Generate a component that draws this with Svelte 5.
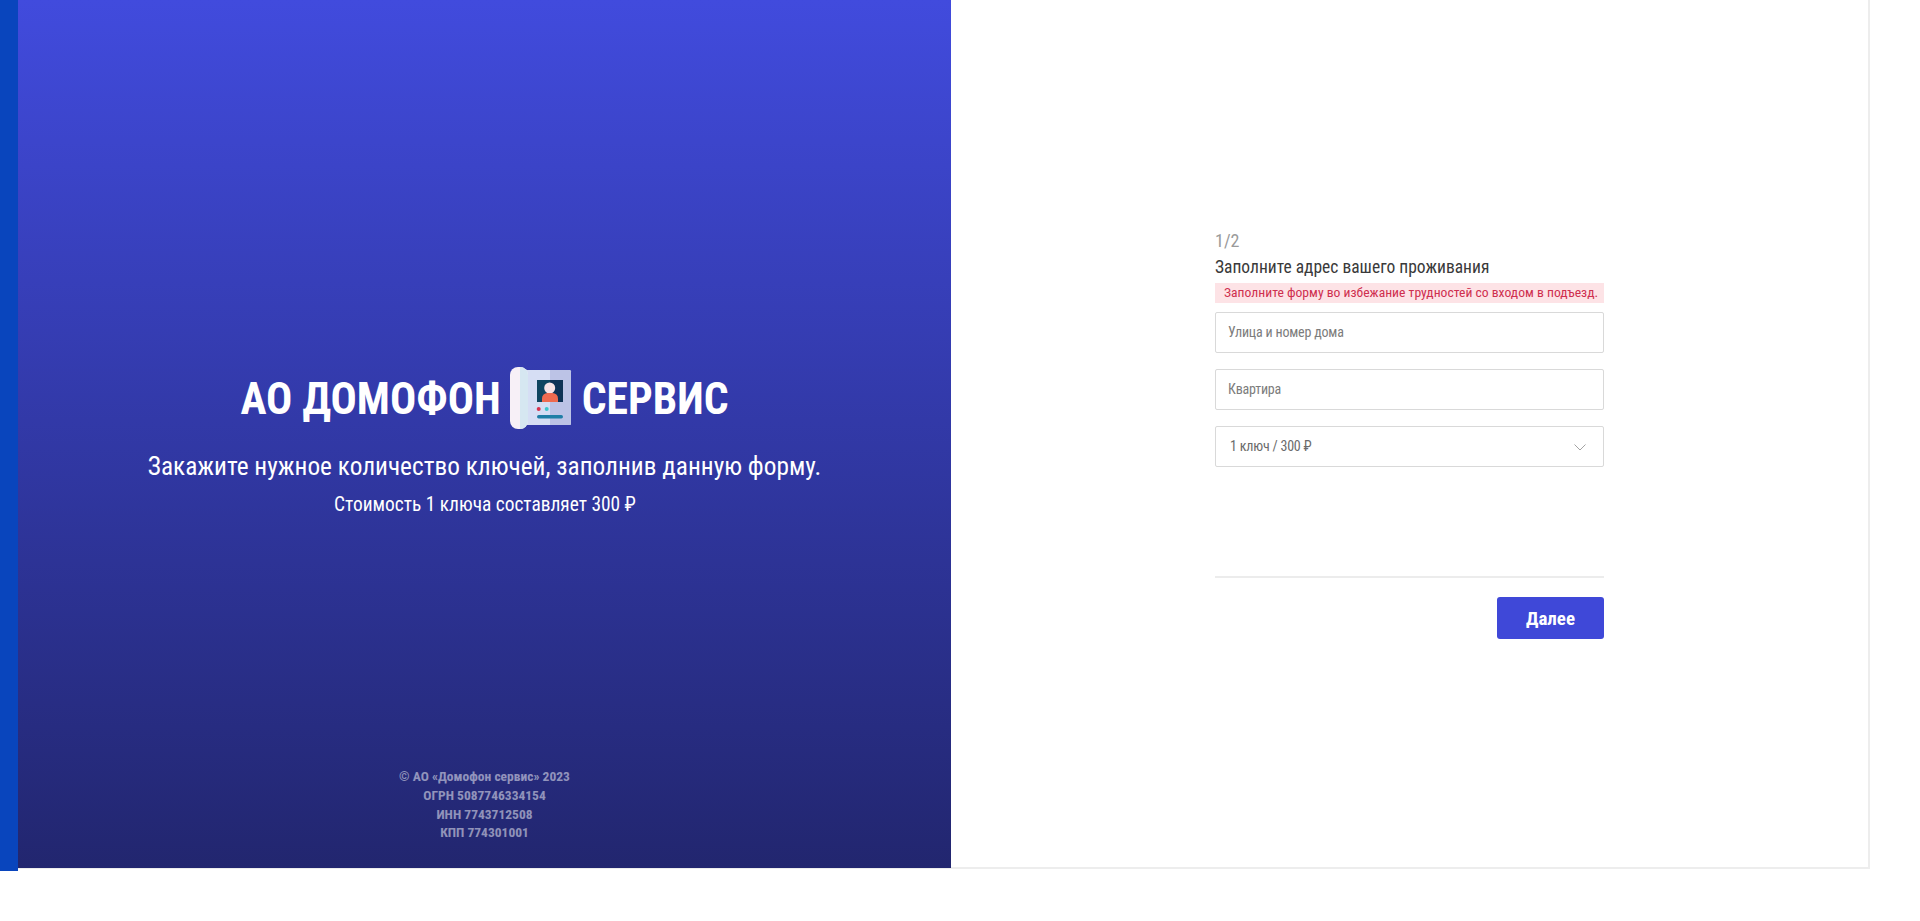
<script>
    let street = $state('');
    let flat = $state('');
    let keys = $state('1');
    const options = [1, 2, 3, 4, 5];
</script>

<div class="page">
    <div class="stripe"></div>
    <div class="card">
        <section class="promo">
            <div class="promo-main">
                <h1>
                    <span>АО ДОМОФОН</span>
                    <svg class="logo" viewBox="0 0 62 62" aria-hidden="true">
                        <rect x="9" y="3" width="52" height="55" rx="1.500" fill="#d6def4" />
                        <path d="M40 3h19.500a1.500 1.500 0 0 1 1.500 1.500v52a1.500 1.500 0 0 1-1.500 1.500H40z" fill="#bcc3e6" />
                        <rect x="0" y="0" width="18" height="62" rx="8" fill="#f7f0f7" />
                        <path d="M10 0h0a8 8 0 0 1 8 8v46a8 8 0 0 1-8 8h0z" fill="#d6e7f1" />
                        <rect x="27" y="13" width="26" height="22" fill="#0f4560" />
                        <rect x="40" y="13" width="13" height="22" fill="#0e3256" />
                        <circle cx="39.700" cy="21" r="5.500" fill="#f7e3e6" />
                        <path d="M32 35v-3.500a5.500 5.500 0 0 1 5.500-5.500h5a5.500 5.500 0 0 1 5.500 5.500V35z" fill="#ee6a50" />
                        <circle cx="28.700" cy="42" r="2" fill="#d8324f" />
                        <circle cx="36.700" cy="42" r="2" fill="#3fc6cc" />
                        <rect x="27" y="48" width="26" height="3.500" rx="1.700" fill="#1f7ea6" />
                    </svg>
                    <span>СЕРВИС</span>
                </h1>
                <p class="lead">Закажите нужное количество ключей, заполнив данную форму.</p>
                <p class="price">Стоимость 1 ключа составляет 300 ₽</p>
            </div>
            <footer>
                <div>© АО «Домофон сервис» 2023</div>
                <div>ОГРН 5087746334154</div>
                <div>ИНН 7743712508</div>
                <div>КПП 774301001</div>
            </footer>
        </section>

        <section class="side">
            <form onsubmit={(e) => e.preventDefault()}>
                <div class="step">1/2</div>
                <div class="title">Заполните адрес вашего проживания</div>
                <div class="alert">Заполните форму во избежание трудностей со входом в подъезд.</div>

                <input class="field" type="text" placeholder="Улица и номер дома" bind:value={street} />
                <input class="field" type="text" placeholder="Квартира" bind:value={flat} />

                <div class="select-wrap">
                    <select class="field" bind:value={keys}>
                        {#each options as n}
                            <option value={String(n)}>{n} ключ / {n * 300} ₽</option>
                        {/each}
                    </select>
                    <svg class="chevron" viewBox="0 0 12 7" aria-hidden="true">
                        <path d="M0.500 0.500L6 6L11.500 0.500" fill="none" stroke="#a3a3a3" stroke-width="1" />
                    </svg>
                </div>

                <div class="actions">
                    <button type="submit">Далее</button>
                </div>
            </form>
        </section>
    </div>
</div>

<style>

:global(body) {
    background: #fff;
}

.page {
    display: flex;
    height: 871px;
    font-family: Roboto, "Liberation Sans", sans-serif;
    font-stretch: 75%;
}

.stripe {
    width: 18px;
    background: #0945bd;
}

.card {
    flex: 1;
    max-width: 1852px;
    height: 869px;
    display: flex;
    box-sizing: border-box;
    border-right: 2px solid #ededed;
    border-bottom: 2px solid #ededed;
}

.promo {
    width: 933px;
    margin-bottom: -1px;
    display: flex;
    flex-direction: column;
    align-items: center;
    color: #fff;
    background: linear-gradient(180deg, #414bdd 0%, #22266f 100%);
}

.promo-main {
    padding-top: 367px;
    flex: 1;
    text-align: center;
}

h1 {
    margin: 0;
    display: flex;
    justify-content: center;
    align-items: center;
    gap: 9.500px;
    height: 64px;
    font-size: 43.600px;
    font-weight: 700;
}

.logo {
    width: 62px;
    height: 62px;
    margin-bottom: 2px;
}

.lead {
    margin: 21px 0 0;
    font-size: 25.300px;
    line-height: 30px;
}

.price {
    margin: 11px 0 0;
    padding-left: 1px;
    font-size: 19.400px;
    line-height: 24px;
}

footer {
    padding-bottom: 26px;
    text-align: center;
    font-size: 13.500px;
    line-height: 18.700px;
    font-weight: 700;
    color: rgba(255, 255, 255, 0.5);
}

.side {
    flex: 1;
    display: flex;
    justify-content: center;
    align-items: center;
    padding-top: 1px;
}

form {
    width: 389px;
    display: flex;
    flex-direction: column;
}

.step {
    font-size: 18px;
    line-height: 24px;
    color: #9a9a9a;
}

.title {
    margin-top: 2px;
    font-size: 17.500px;
    line-height: 24px;
    color: #3a3a3a;
}

.alert {
    margin-top: 3.500px;
    height: 20px;
    line-height: 19px;
    padding-left: 9px;
    font-size: 13.650px;
    white-space: nowrap;
    color: #cf2f4f;
    background: #fde3e6;
}

.field {
    display: block;
    width: 100%;
    height: 41px;
    margin-top: 9px;
    padding: 0 12px;
    box-sizing: border-box;
    border: 1px solid #d9d9d9;
    border-radius: 2px;
    background: #fff;
    font-family: inherit;
    font-stretch: inherit;
    font-size: 14px;
    letter-spacing: -0.200px;
    color: #6b6b6b;
}

.field + .field {
    margin-top: 16px;
}

.field::placeholder {
    color: #7c7c7c;
}

.select-wrap {
    position: relative;
    margin-top: 16px;
}

select.field {
    margin-top: 0;
    padding-left: 14px;
    appearance: none;
}

.chevron {
    position: absolute;
    right: 18px;
    top: 18px;
    width: 12px;
    height: 7px;
}

.actions {
    margin-top: 109.500px;
    padding-top: 19px;
    border-top: 2px solid #ececec;
    display: flex;
    justify-content: flex-end;
}

button {
    width: 107px;
    height: 42px;
    border: none;
    border-radius: 3px;
    background: #3f48d8;
    color: #fff;
    font-family: inherit;
    font-stretch: inherit;
    font-size: 19px;
    font-weight: 700;
}

</style>
